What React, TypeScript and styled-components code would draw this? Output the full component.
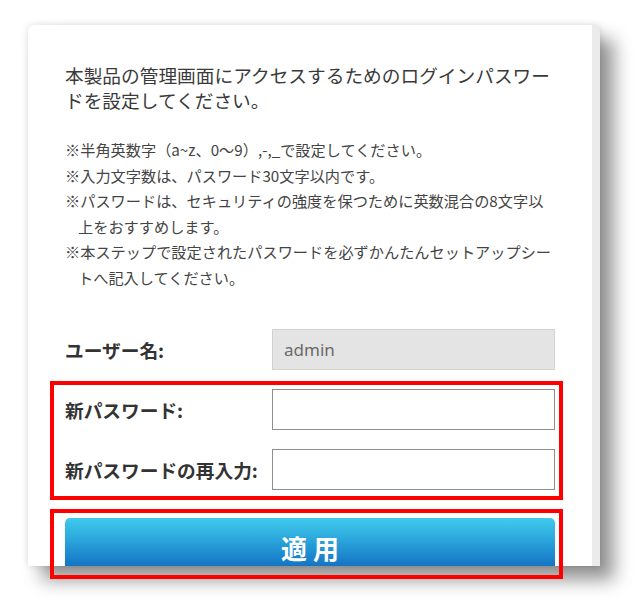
import styled, { createGlobalStyle } from "styled-components";

const GlobalStyle = createGlobalStyle`
  html, body {
    margin: 0;
    padding: 0;
    background: #ffffff;
  }
  body {
    font-family: "Noto Sans CJK JP", "Noto Sans", sans-serif;
  }
`;

const notes = [
  "※半角英数字（a~z、0～9）,-,_で設定してください。",
  "※入力文字数は、パスワード30文字以内です。",
  "※パスワードは、セキュリティの強度を保つために英数混合の8文字以上をおすすめします。",
  "※本ステップで設定されたパスワードを必ずかんたんセットアップシートへ記入してください。",
];

export default function App() {
  return (
    <>
      <GlobalStyle />
      <Page>
        <Card>
          <Intro>
            本製品の管理画面にアクセスするためのログインパスワードを設定してください。
          </Intro>

          <NoteList>
            {notes.map((n) => (
              <Note key={n}>{n}</Note>
            ))}
          </NoteList>

          <UserRow>
            <Label>ユーザー名:</Label>
            <TextInput value="admin" readOnly $locked />
          </UserRow>

          {/* red annotation frames drawn over the screenshot */}
          <Highlight $inset="-8px -8px -10px -15px">
            <FormRow>
              <Label>新パスワード:</Label>
              <TextInput type="password" />
            </FormRow>
            <FormRow>
              <Label>新パスワードの再入力:</Label>
              <TextInput type="password" />
            </FormRow>
          </Highlight>

          <ButtonClip $inset="-9px -8px -13px -15px">
            <ApplyButton type="button">適 用</ApplyButton>
          </ButtonClip>
        </Card>
      </Page>
    </>
  );
}

const Page = styled.div`
  width: 642px;
  height: 609px;
  padding: 25px 0 0 28px;
  box-sizing: border-box;
`;

const Card = styled.div`
  width: 490px;
  height: 504px;
  padding: 37px 37px 0 37px;
  background: #ffffff;
  border-right: 8px solid #ebebeb;
  border-radius: 6px 6px 0 0;
  box-shadow: 0 0 7px rgba(0, 0, 0, 0.14), 14px 14px 18px rgba(0, 0, 0, 0.42);
  display: flex;
  flex-direction: column;
`;

const Intro = styled.p`
  margin: 0;
  font-size: 18.7px;
  line-height: 25px;
  color: #3a3a3a;
`;

const NoteList = styled.div`
  margin-top: 25px;
  display: flex;
  flex-direction: column;
`;

const Note = styled.div`
  font-size: 15.2px;
  line-height: 25.6px;
  color: #444444;
  padding-left: 13px;
  text-indent: -13px;
`;

const FormRow = styled.div`
  display: grid;
  grid-template-columns: 207px 1fr;
  align-items: center;
  height: 41px;

  & + & {
    margin-top: 19px;
  }
`;

const UserRow = styled(FormRow)`
  margin-top: 38px;
`;

const Label = styled.label`
  font-size: 18.7px;
  font-weight: 700;
  color: #333333;
  white-space: nowrap;
`;

const TextInput = styled.input<{ $locked?: boolean }>`
  box-sizing: border-box;
  width: 283px;
  height: 41px;
  margin: 0;
  padding: 0 11px;
  font-family: "Noto Sans", "Open Sans", sans-serif;
  font-size: 17px;
  color: #6a6a6a;
  outline: none;
  background: ${(p) => (p.$locked ? "#e4e4e4" : "#ffffff")};
  border: 1px solid ${(p) => (p.$locked ? "#d2d2d2" : "#8e8e8e")};
  border-radius: 0;
`;

const Highlight = styled.div<{ $inset: string }>`
  position: relative;
  margin-top: 19px;

  &::after {
    content: "";
    position: absolute;
    inset: ${(p) => p.$inset};
    border: 4px solid #ff0000;
    pointer-events: none;
  }
`;

const ButtonClip = styled.div<{ $inset: string }>`
  position: relative;
  margin-top: 28px;
  height: 48px;

  &::after {
    content: "";
    position: absolute;
    inset: ${(p) => p.$inset};
    border: 4px solid #ff0000;
    pointer-events: none;
  }
`;

const ApplyButton = styled.button`
  display: block;
  width: 100%;
  height: 48px;
  margin: 0;
  padding: 0;
  overflow: hidden;
  border: none;
  border-radius: 5px 5px 0 0;
  background: linear-gradient(to bottom, #40cbec 0%, #2ba6dc 45%, #1474c3 100%);
  color: #ffffff;
  font-family: "Noto Sans CJK JP", sans-serif;
  font-size: 26px;
  font-weight: 700;
  line-height: 60px;
  text-align: center;
  align-content: start;
  white-space: pre;
`;
